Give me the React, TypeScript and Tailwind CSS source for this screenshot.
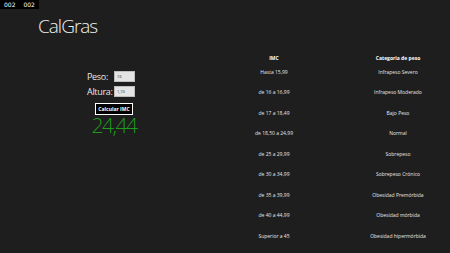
import React from 'react';

const rows: [string, string][] = [
  ['Hasta 15,99', 'Infrapeso Severo'],
  ['de 16 a 16,99', 'Infrapeso Moderado'],
  ['de 17 a 18,49', 'Bajo Peso'],
  ['de 18,50 a 24,99', 'Normal'],
  ['de 25 a 29,99', 'Sobrepeso'],
  ['de 30 a 34,99', 'Sobrepeso Crónico'],
  ['de 35 a 39,99', 'Obesidad Premórbida'],
  ['de 40 a 44,99', 'Obesidad mórbida'],
  ['Superior a 45', 'Obesidad hipermórbida'],
];

const Field: React.FC<{ label: string; value: string }> = ({ label, value }) => (
  <div className="flex items-center h-[11px]">
    <span className="w-[27px] text-[9px] tracking-[-0.3px] leading-none text-[#e8e8e8] whitespace-nowrap">{label}</span>
    <div className="w-[21px] h-[11px] bg-[#e4e4e4] border border-[#bdbdbd] text-[4px] leading-[9px] pl-[2px] text-[#333]">
      {value}
    </div>
  </div>
);

export default function App() {
  return (
    <div className="relative flex w-[450px] h-[253px] overflow-hidden bg-[#1e1e1e] font-['Open_Sans','Noto_Sans',sans-serif]">
      <div className="absolute left-0 top-0 flex gap-[8px] bg-black px-[4px] h-[9px] items-center text-[6px] leading-none text-white font-['DejaVu_Sans',sans-serif]">
        <span>002</span>
        <span>002</span>
      </div>

      <div className="w-[240px] flex flex-col">
        <h1 className="ml-[38px] mt-[14px] text-[19px] tracking-[-1px] leading-[24px] font-light text-[#f0f0f0]">CalGras</h1>
        <div className="ml-[87px] mt-[33px] flex flex-col gap-[4px] w-[49px]">
          <Field label="Peso:" value="74" />
          <Field label="Altura:" value="1,74" />
        </div>
        <div className="ml-[74px] w-[80px] flex flex-col items-center mt-[6px]">
          <button className="w-[38px] h-[12px] border border-white bg-black text-[5px] font-bold leading-none text-white">
            Calcular IMC
          </button>
          <div className="text-[21px] tracking-[-1.5px] leading-[20px] font-light text-[#1f9a1f]">24,44</div>
        </div>
      </div>

      <div className="mt-[54px] grid grid-cols-[76px_104px] gap-x-[34px] content-start text-[5px] text-[#e6e6e6]">
        <div className="h-[8px] text-center font-bold text-white leading-[8px]">IMC</div>
        <div className="h-[8px] text-center font-bold text-white leading-[8px]">Categoria de peso</div>
        {rows.map(([imc, cat]) => (
          <React.Fragment key={imc}>
            <div className="h-[20.5px] flex items-center justify-center">{imc}</div>
            <div className="h-[20.5px] flex items-center justify-center">{cat}</div>
          </React.Fragment>
        ))}
      </div>
    </div>
  );
}
